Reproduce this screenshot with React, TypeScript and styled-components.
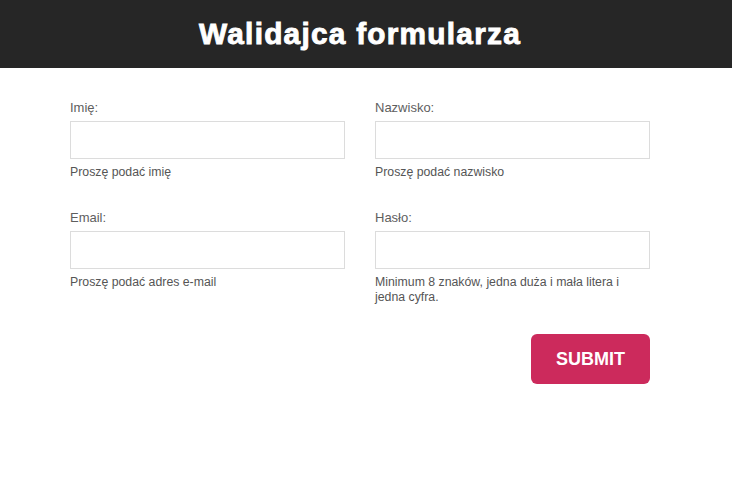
import React from "react";
import styled, { createGlobalStyle } from "styled-components";

const Global = createGlobalStyle`
  html, body { margin: 0; padding: 0; background: #fff; }
  body { font-family: "Liberation Sans", Arial, sans-serif; }
  * { box-sizing: border-box; }
`;

const Header = styled.header`
  height: 68px;
  background: #262626;
  display: flex;
  align-items: center;
  justify-content: center;
  padding-right: 12px;
`;

const Title = styled.h1`
  margin: 0;
  color: #fff;
  font-family: "Liberation Sans", Arial, sans-serif;
  font-weight: 700;
  font-size: 29.8px;
  letter-spacing: 1.25px;
  -webkit-text-stroke: 0.9px #fff;
`;

const Form = styled.form`
  width: 580px;
  margin: 32px 0 0 70px;
  display: grid;
  grid-template-columns: 275px 275px;
  column-gap: 30px;
  row-gap: 30px;
`;

const Field = styled.div`
  display: flex;
  flex-direction: column;
`;

const Label = styled.label`
  font-size: 13px;
  color: #5e5e5e;
  line-height: 16px;
  margin-bottom: 5px;
`;

const Input = styled.input`
  height: 38px;
  width: 100%;
  border: 1px solid #dcdcdc;
  background: #fff;
  outline: none;
  padding: 0 8px;
  font-size: 14px;
`;

const Help = styled.span`
  font-size: 12.3px;
  color: #555;
  line-height: 15px;
  margin-top: 6px;
`;

const Actions = styled.div`
  grid-column: 1 / -1;
  display: flex;
  justify-content: flex-end;
  margin-top: -1px;
`;

const Submit = styled.button`
  width: 119px;
  height: 50px;
  border: none;
  border-radius: 6px;
  background: #cc2a5c;
  color: #fff;
  font-family: "Liberation Sans", Arial, sans-serif;
  font-weight: 700;
  font-size: 18px;
  cursor: pointer;
`;

export default function App() {
  return (
    <>
      <Global />
      <Header>
        <Title>Walidajca formularza</Title>
      </Header>
      <Form onSubmit={(e) => e.preventDefault()}>
        <Field>
          <Label>Imię:</Label>
          <Input type="text" />
          <Help>Proszę podać imię</Help>
        </Field>
        <Field>
          <Label>Nazwisko:</Label>
          <Input type="text" />
          <Help>Proszę podać nazwisko</Help>
        </Field>
        <Field>
          <Label>Email:</Label>
          <Input type="email" />
          <Help>Proszę podać adres e-mail</Help>
        </Field>
        <Field>
          <Label>Hasło:</Label>
          <Input type="password" />
          <Help>Minimum 8 znaków, jedna duża i mała litera i jedna cyfra.</Help>
        </Field>
        <Actions>
          <Submit type="submit">SUBMIT</Submit>
        </Actions>
      </Form>
    </>
  );
}
